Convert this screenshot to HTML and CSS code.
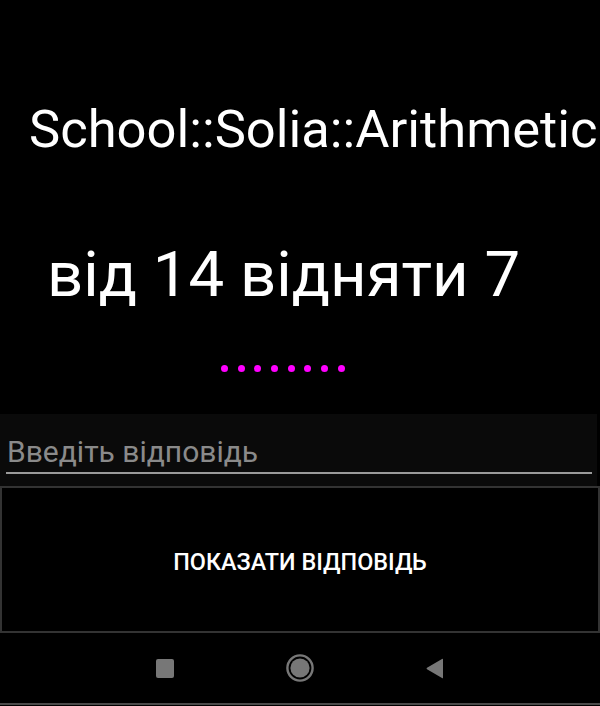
FILE: index.html
```html
<!DOCTYPE html>
<html lang="uk">
<head>
<meta charset="utf-8">
<title>School::Solia::Arithmetic</title>
<link rel="stylesheet" href="styles.css">
</head>
<body>
<div class="screen">
  <h1 class="title">School::Solia::Arithmetic</h1>
  <div class="question">від 14 відняти 7</div>
  <div class="dots">
    <span class="dot"></span><span class="dot"></span><span class="dot"></span><span class="dot"></span>
    <span class="dot"></span><span class="dot"></span><span class="dot"></span><span class="dot"></span>
  </div>
  <div class="input-wrap">
    <div class="input">Введіть відповідь</div>
  </div>
  <button class="show">ПОКАЗАТИ ВІДПОВІДЬ</button>
  <nav class="navbar">
    <svg class="nav-icon" width="18" height="19" viewBox="0 0 18 19"><rect x="0" y="0" width="18" height="19" rx="2" fill="#777"/></svg>
    <svg class="nav-icon" width="28" height="28" viewBox="0 0 28 28"><circle cx="14" cy="14" r="12.6" fill="none" stroke="#777" stroke-width="2.4"/><circle cx="14" cy="14" r="9.6" fill="#777"/></svg>
    <svg class="nav-icon" width="18" height="21" viewBox="0 0 18 21"><path d="M17 1.5 L17 19.5 Q17 20.8 16 20.1 L1 11.3 Q0 10.5 1 9.7 L16 0.9 Q17 0.3 17 1.5 Z" fill="#777"/></svg>
  </nav>
</div>
</body>
</html>
```
FILE: styles.css
```css
html, body {
  margin: 0;
  padding: 0;
  background: #000;
}
.screen {
  width: 600px;
  height: 706px;
  overflow: hidden;
  background: #000;
  font-family: Roboto, "Noto Sans", sans-serif;
  color: #fff;
}
.title {
  margin: 0;
  padding: 103px 0 0 29px;
  font-size: 52.5px;
  line-height: 53px;
  font-weight: 400;
  white-space: nowrap;
}
.question {
  margin-top: 87px;
  padding-left: 47px;
  font-size: 63.5px;
  line-height: 64px;
  white-space: nowrap;
}
.dots {
  margin-top: 58px;
  padding-left: 221px;
  display: flex;
  gap: 9.7px;
  height: 7px;
}
.dot {
  width: 7px;
  height: 7px;
  border-radius: 50%;
  background: #ff00ff;
}
.input-wrap {
  margin-top: 42px;
  width: 597px;
  background: #0a0a0a;
  padding: 23px 0 12px;
}
.input {
  margin: 0 5px 0 6px;
  padding: 0 0 5px 1px;
  font-size: 30px;
  line-height: 30px;
  color: #8a8a8a;
  border-bottom: 2px solid #9a9a9a;
}
.show {
  display: flex;
  align-items: center;
  justify-content: center;
  box-sizing: border-box;
  width: 600px;
  height: 147px;
  margin: 0;
  padding: 5px 0 0;
  background: #000;
  border: 2px solid #333;
  color: #fff;
  font-family: Roboto, "Noto Sans", sans-serif;
  font-size: 23.4px;
  font-weight: 500;
}
.navbar {
  box-sizing: border-box;
  height: 72px;
  display: flex;
  align-items: center;
  gap: 112px;
  padding-left: 156px;
  border-bottom: 2px solid #4a4a4a;
}
.nav-icon {
  display: block;
}
```
